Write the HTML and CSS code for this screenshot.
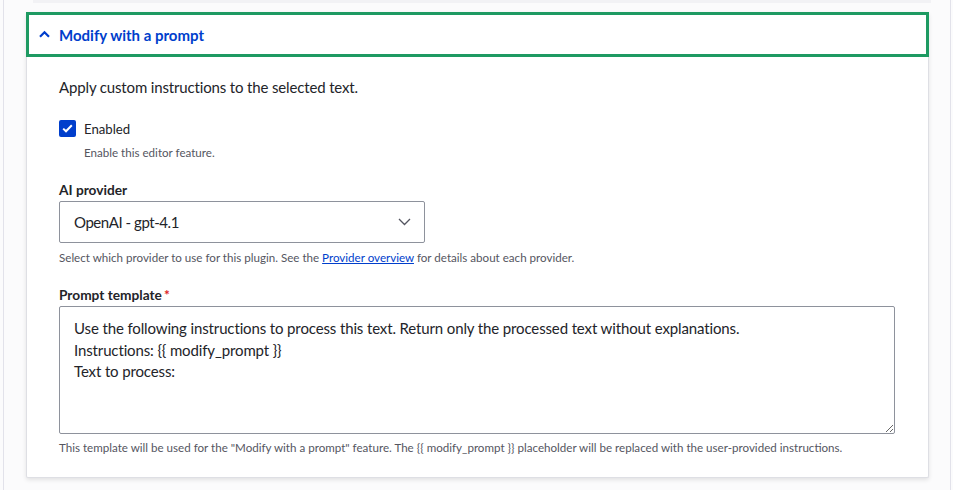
FILE: index.html
```html
<!DOCTYPE html>
<html lang="en">
<head>
<meta charset="utf-8">
<title>Modify with a prompt</title>
<link rel="stylesheet" href="styles.css">
</head>
<body>
<div class="wrap">
  <div class="prev-edge"></div>
  <details class="card" open>
    <summary class="summary">
      <svg class="sum-chev" width="11" height="8" viewBox="0 0 11 8"><path d="M1 6.8 L5.5 2.3 L10 6.8" fill="none" stroke="#003ecc" stroke-width="2.2"/></svg>
      <span>Modify with a prompt</span>
    </summary>
    <div class="content">
      <p class="intro">Apply custom instructions to the selected text.</p>

      <div class="item check-item">
        <div class="check-row">
          <span class="checkbox"><svg width="11" height="9" viewBox="0 0 11 9"><path d="M1.2 4.6 L4 7.3 L9.8 1.3" fill="none" stroke="#fff" stroke-width="2"/></svg></span>
          <label class="check-label">Enabled</label>
        </div>
        <div class="desc desc-indent">Enable this editor feature.</div>
      </div>

      <div class="item provider">
        <label class="label">AI provider</label>
        <div class="select-wrap">
          <select class="select"><option>OpenAI - gpt-4.1</option></select>
          <svg class="sel-chev" width="13" height="8" viewBox="0 0 13 8"><path d="M1 1 L6.5 6.5 L12 1" fill="none" stroke="#545560" stroke-width="1.3"/></svg>
        </div>
        <div class="desc">Select which provider to use for this plugin. See the <a href="#">Provider overview</a> for details about each provider.</div>
      </div>

      <div class="item template">
        <label class="label">Prompt template<span class="req">*</span></label>
        <textarea class="textarea">Use the following instructions to process this text. Return only the processed text without explanations.
Instructions: {{ modify_prompt }}
Text to process:</textarea>
        <div class="desc">This template will be used for the "Modify with a prompt" feature. The {{ modify_prompt }} placeholder will be replaced with the user-provided instructions.</div>
      </div>
    </div>
  </details>
</div>
</body>
</html>
```

FILE: styles.css
```css
html, body {
  margin: 0;
  padding: 0;
  background: #fbfbfc;
}
body {
  font-family: "Lato", "Open Sans", sans-serif;
  color: #232429;
  height: 490px;
  overflow: hidden;
}
.wrap {
  margin: 0 2px 0 3px;
  border-left: 1px solid #e2e2ea;
  border-right: 1px solid #e2e2ea;
  padding: 0 21px 0 22px;
  height: 490px;
  box-sizing: border-box;
}
.prev-edge {
  height: 3px;
  margin: 0 -2px 0 7px;
  background: #f2f2f5;
}
.card {
  margin-top: 9px;
  background: #fff;
  border: 1px solid #dedfe4;
  border-top: 0;
  border-radius: 2px;
  box-shadow: 0 2px 4px rgba(0, 0, 0, 0.1);
}
.summary {
  list-style: none;
  display: flex;
  align-items: center;
  height: 45px;
  box-sizing: border-box;
  margin: 0 -1px 0 -1px;
  padding: 0 0 0 13px;
  box-shadow: inset 0 0 0 3px #1e9a62;
  color: #003ecc;
  font-weight: 700;
  font-size: 15px;
  cursor: pointer;
}
.summary::-webkit-details-marker { display: none; }
.sum-chev {
  margin: 0 9px 1px 0;
}
.content {
  padding: 18px 33px 21px 32px;
}
.intro {
  margin: 0;
  font-size: 15px;
  letter-spacing: -0.15px;
  line-height: 24px;
}
.item {
  display: flex;
  flex-direction: column;
}
.check-item {
  margin-top: 21px;
}
.check-row {
  display: flex;
  align-items: center;
  height: 17px;
}
.checkbox {
  width: 17px;
  height: 17px;
  box-sizing: border-box;
  border-radius: 2px;
  background: #003ecc;
  display: flex;
  align-items: center;
  justify-content: center;
}
.check-label {
  margin-left: 8px;
  font-size: 13.2px;
}
.desc {
  font-size: 11.6px;
  line-height: 16px;
  color: #55565f;
}
.desc-indent {
  margin-left: 25px;
  margin-top: 8px;
}
.desc a {
  color: #003ecc;
  text-decoration: underline;
}
.provider {
  margin-top: 19px;
}
.label {
  font-size: 13.7px;
  font-weight: 700;
  line-height: 20px;
  margin-bottom: 1px;
}
.select-wrap {
  position: relative;
  width: 366px;
}
.select {
  appearance: none;
  -webkit-appearance: none;
  width: 366px;
  height: 42px;
  box-sizing: border-box;
  border: 1px solid #8e929c;
  border-radius: 2px;
  background: #fff;
  padding: 0 40px 0 14px;
  font-family: inherit;
  font-size: 15px;
  letter-spacing: -0.45px;
  color: #232429;
}
.sel-chev {
  position: absolute;
  right: 14px;
  top: 17px;
  pointer-events: none;
}
.provider .desc {
  margin-top: 7px;
}
.template {
  margin-top: 19px;
}
.req {
  color: #dc2323;
  margin-left: 2px;
}
.textarea {
  height: 128px;
  box-sizing: border-box;
  border: 1px solid #8e929c;
  border-radius: 2px;
  padding: 11px 14px;
  font-family: inherit;
  font-size: 15px;
  letter-spacing: -0.13px;
  line-height: 21.5px;
  color: #232429;
  resize: vertical;
  background: #fff;
}
.template .desc {
  margin-top: 6px;
}
```
